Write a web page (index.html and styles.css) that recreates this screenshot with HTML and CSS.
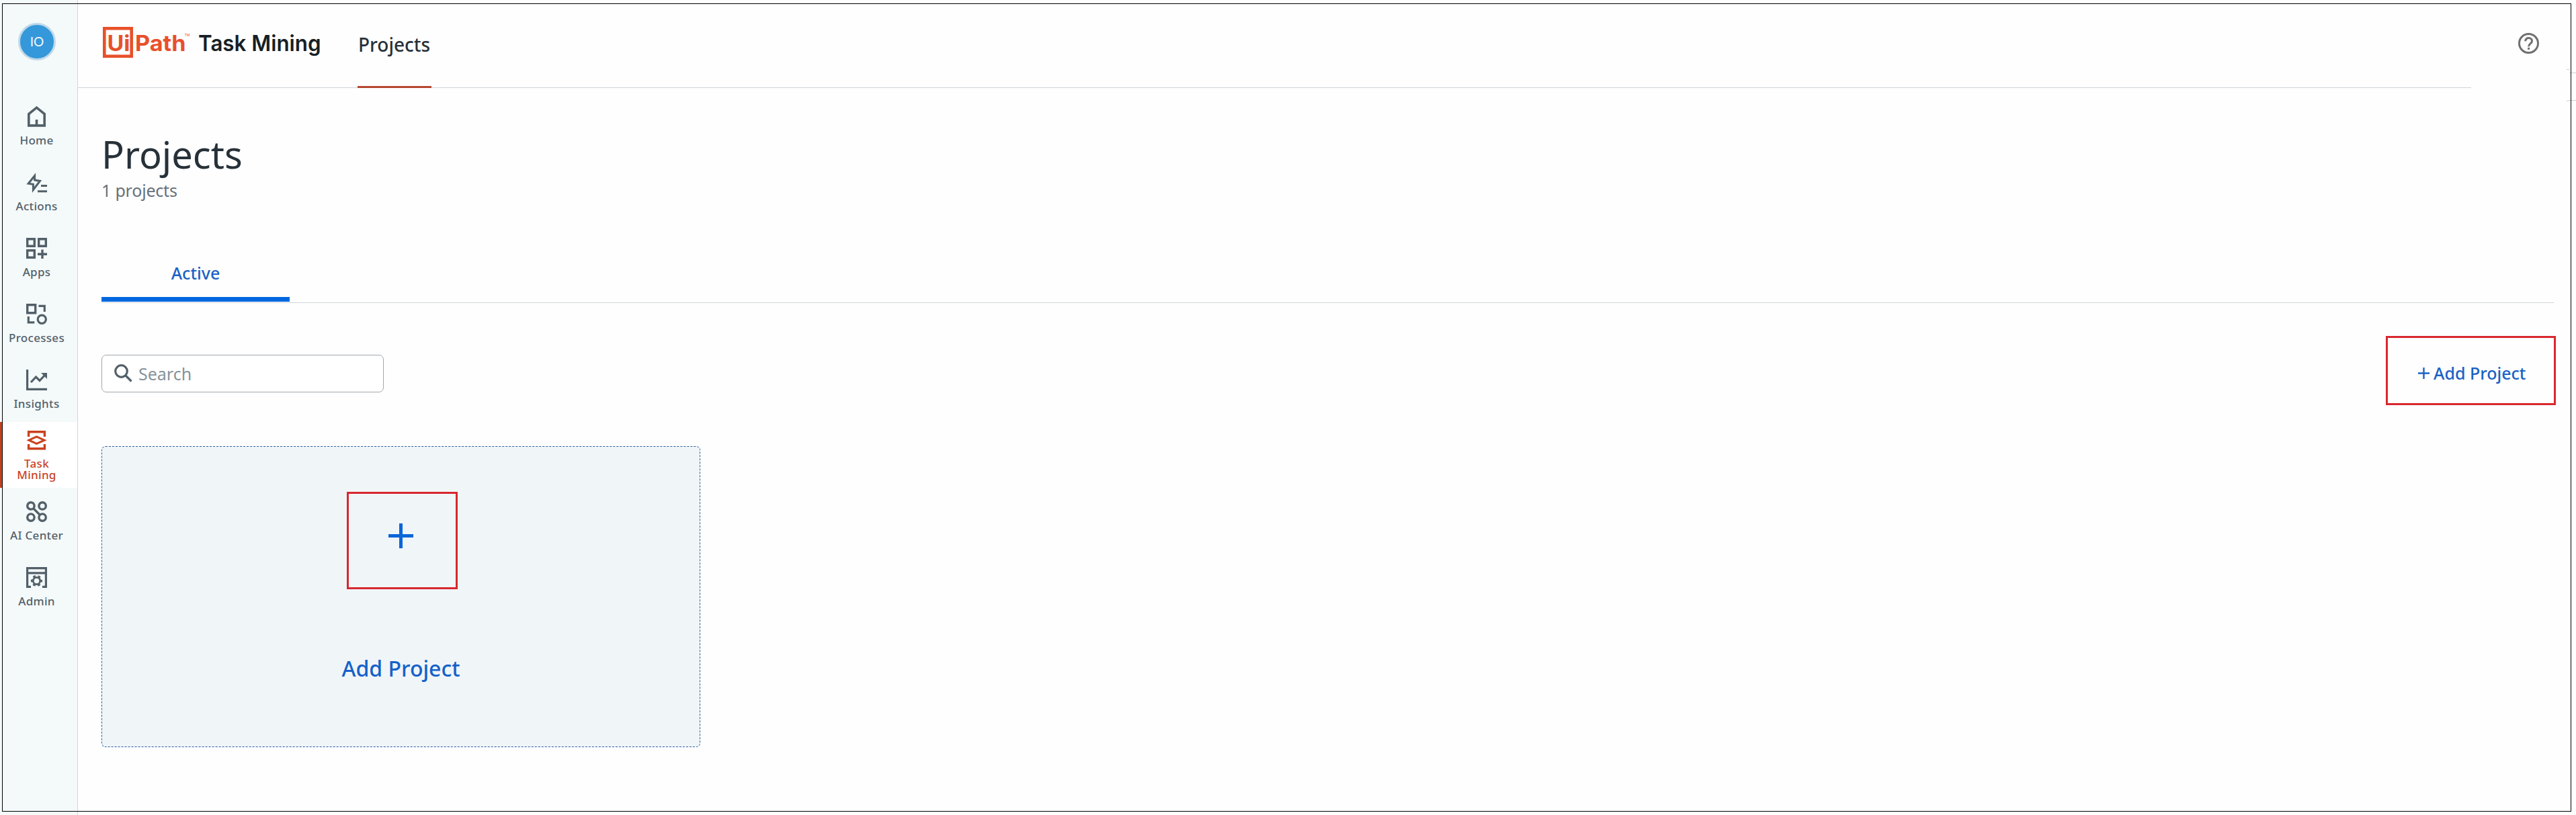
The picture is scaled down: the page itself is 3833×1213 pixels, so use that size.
FILE: index.html
```html
<!DOCTYPE html>
<html lang="en">
<head>
<meta charset="utf-8">
<title>Task Mining - Projects</title>
<link rel="stylesheet" href="styles.css">
</head>
<body>
<aside class="sidebar">
  <div class="avatar">IO</div>
  <nav class="side-nav">
    <a class="item"><svg class="icon" viewBox="0 0 31 31"><path d="M3.800 11.600 15.500 2.200l11.700 9.400v17.300H3.800z" stroke-width="3.600"/><path d="M15.500 20v9" stroke-width="3.600"/></svg><span>Home</span></a>
    <a class="item"><svg class="icon" viewBox="0 0 31 31"><path d="M12.600 5.500 3.200 17.200l7.200 1v8.300L20.500 13.400l-7.900-1.400z" stroke-width="3"/><path d="M22 20.500h9M17 28.800h14" stroke-width="3"/></svg><span>Actions</span></a>
    <a class="item"><svg class="icon" viewBox="0 0 31 31"><path d="M1.700 1.700h10.600v10.600H1.700zM18.700 1.700h10.600v10.600H18.700zM1.700 18.700h10.600v10.600H1.700z" stroke-width="3.400"/><path d="M24 17.500V31M17 24.200h14" stroke-width="3.400"/></svg><span>Apps</span></a>
    <a class="item"><svg class="icon" viewBox="0 0 31 31"><path d="M1.700 1.700h12v12h-12z" stroke-width="3.400"/><path d="M18.500 3.300h8.800v8.700M3.300 19v8.800h9" stroke-width="3.200"/><circle cx="23.300" cy="23.300" r="6.100" stroke-width="3.200"/></svg><span>Processes</span></a>
    <a class="item"><svg class="icon" viewBox="0 0 31 31"><path d="M1.600 0v29.400H31" stroke-width="3.200"/><path d="m7 19 7.500-8 5.500 5.500 8-8.500" stroke-width="3.200"/><path class="solid" d="M22 5h9v9z"/></svg><span>Insights</span></a>
    <a class="item active"><svg class="icon" viewBox="0 0 31 31"><path d="M3.600 10V2.800h23.800V10M3.600 21v6.800h23.800V21" stroke-width="3.400"/><path d="M4 15.200 15.500 10 27 15.200l-11.500 5.200z" stroke-width="3"/></svg><span>Task<br>Mining</span></a>
    <a class="item"><svg class="icon" viewBox="0 0 31 31"><g stroke-width="3.400"><circle cx="6.900" cy="6.900" r="5.200"/><circle cx="24.100" cy="6.900" r="5.200"/><circle cx="6.900" cy="24.100" r="5.200"/><circle cx="24.100" cy="24.100" r="5.200"/><path d="m10.500 10.500 10 10"/></g></svg><span>AI Center</span></a>
    <a class="item"><svg class="icon" viewBox="0 0 31 31"><path d="M7 29.400H1.600V1.600h27.800v27.800H24M1.600 8.800h27.800" stroke-width="3.200"/><circle cx="15.500" cy="20.500" r="5.200" stroke-width="2.800"/><circle cx="15.500" cy="20.500" r="7.300" stroke-width="2.600" stroke-dasharray="3.820 3.820" stroke-dashoffset="1.900"/></svg><span>Admin</span></a>
  </nav>
</aside>
<main class="main">
  <header class="header">
    <div class="bar">
      <svg class="logo" width="328" height="56" viewBox="0 0 328 56">
        <rect class="logo-box" x="2.300" y="7.300" width="40.400" height="41.400"/>
        <g class="logo-brand">
          <text x="6.500" y="41" textLength="34" lengthAdjust="spacingAndGlyphs">Ui</text>
          <text x="48" y="41" textLength="75.500" lengthAdjust="spacingAndGlyphs">Path</text>
          <text class="tm" x="121.500" y="19">TM</text>
        </g>
        <text class="logo-product" x="142" y="41" textLength="182.500" lengthAdjust="spacingAndGlyphs">Task Mining</text>
      </svg>
      <a class="top-tab">Projects</a>
    </div>
    <svg class="help" viewBox="0 0 31 31"><circle cx="15.500" cy="15.500" r="14" stroke-width="3"/><path d="M10.700 12.200c0-6.200 9.800-6.100 9.800 0 0 3.700-4.900 3.900-4.900 8" stroke-width="3"/><path d="M15.600 21.800v3" stroke-width="3"/></svg>
  </header>
  <section class="content">
    <h1>Projects</h1>
    <p class="count">1 projects</p>
    <div class="tabs"><a class="tab">Active</a></div>
    <div class="toolbar">
      <label class="search"><svg viewBox="0 0 27 27"><circle cx="10.500" cy="10.500" r="8.800"/><path d="m17 17 8.500 8.500"/></svg><span>Search</span></label>
      <a class="add-button"><svg viewBox="0 0 17 17"><path d="M8.500 0v17M0 8.500h17"/></svg><span>Add Project</span></a>
    </div>
    <a class="card">
      <span class="card-plus"><svg viewBox="0 0 37 37"><path d="M18.500 0v37M0 18.500h37"/></svg></span>
      <span class="card-label">Add Project</span>
    </a>
  </section>
</main>
<svg class="edge-marks" viewBox="0 0 14 48"><path d="M0 .5h4M4 5.500h10M4 46.500h10M0 47h4"/></svg>
<div class="frame"></div>
</body>
</html>
```
FILE: styles.css
```css
* { box-sizing: border-box; }
body {
  margin: 0;
  width: 3833px;
  height: 1213px;
  position: relative;
  display: flex;
  overflow: hidden;
  background: #fefefe;
  color: #273139;
  font-family: "Noto Sans", sans-serif;
}
svg { display: block; flex: none; fill: none; }

/* Window outline drawn over the page */
.frame {
  position: absolute;
  inset: 5px 7px 5px 3px;
  border: 1px solid #000;
}
.edge-marks {
  position: absolute;
  left: 3819px;
  top: 103px;
  width: 14px;
  height: 48px;
  stroke: #cccccc;
}

/* Sidebar */
.sidebar {
  flex: none;
  width: 116px;
  border-right: 1px solid #cfd6db;
  background: #f4f9fa;
}
.avatar {
  width: 56px;
  height: 56px;
  margin: 34px 0 48px 27px;
  border: 3px solid #c0d9e8;
  border-radius: 50%;
  background: #3498db;
  color: #f2faff;
  font: 400 19px/50px "Lato", sans-serif;
  text-align: center;
}
.item {
  display: flex;
  flex-direction: column;
  align-items: center;
  gap: 11px;
  height: 98px;
  padding: 20px 6px 0 0;
  color: #526069;
  font-size: 17px;
  font-weight: 500;
  line-height: 17px;
  letter-spacing: 0.3px;
  text-align: center;
}
.item span { white-space: nowrap; }
.icon { width: 31px; height: 31px; stroke: currentColor; }
.icon .solid { fill: currentColor; stroke: none; }
.item.active {
  gap: 10px;
  padding: 12px 9px 0 0;
  border-left: 3px solid #c6401d;
  background: #fff;
  color: #c9421f;
}

/* Header */
.main { flex: 1; }
.header { display: flex; height: 131px; }
.bar {
  display: flex;
  width: 3561px;
  padding-left: 37px;
  border-bottom: 1px solid #cfd4d8;
}
.logo { margin-top: 35px; overflow: visible; }
.logo-box { stroke: #e8502a; stroke-width: 4.600; }
.logo text { font-family: "Inter", sans-serif; font-size: 33px; font-weight: 600; }
.logo-brand { fill: #e8502a; }
.logo .logo-brand text { font-weight: 700; }
.logo .logo-brand .tm { font-size: 5px; font-weight: 400; }
.logo-product { fill: #171f26; }
.top-tab {
  width: 110px;
  height: 131px;
  margin-left: 51px;
  padding: 46px 0 0 1px;
  border-bottom: 3px solid #b5472f;
  font-size: 28px;
  font-weight: 500;
  line-height: 40px;
  white-space: nowrap;
}
.help { width: 31px; height: 31px; margin: 49px 0 0 70px; stroke: #707070; }

/* Page content */
.content { padding: 70px 30px 0 35px; }
h1 { margin: 0; font-size: 56px; font-weight: 400; line-height: 56px; }
.count {
  margin: 9px 0 0;
  color: #687078;
  font-size: 25px;
  line-height: 34px;
  letter-spacing: -0.2px;
}
.tabs {
  display: flex;
  margin: 89px 3px 0 0;
  padding-bottom: 1px;
  border-bottom: 1px solid #cfd4d8;
}
.tab {
  width: 280px;
  padding-bottom: 19px;
  border-bottom: 7px solid #0067df;
  color: #1b62c4;
  font-size: 25px;
  font-weight: 550;
  line-height: 34px;
  text-align: center;
}
.toolbar {
  display: flex;
  justify-content: space-between;
  align-items: flex-start;
  height: 103px;
  margin-top: 49px;
}
.search {
  display: flex;
  align-items: center;
  gap: 9px;
  width: 420px;
  height: 56px;
  margin-top: 28px;
  padding-left: 18px;
  border: 1px solid #a2a8ad;
  border-radius: 7px;
  background: #fff;
  color: #87939a;
  font-size: 25px;
  line-height: 34px;
}
.search svg { width: 27px; height: 27px; margin-top: -2px; stroke: #526069; stroke-width: 3.200; }
.add-button {
  display: flex;
  gap: 6px;
  width: 253px;
  height: 103px;
  padding: 35px 0 0 45px;
  border: 3px solid #d9272e;
  color: #1b62c4;
  font-size: 25px;
  font-weight: 550;
  line-height: 34px;
  white-space: nowrap;
}
.add-button svg { width: 17px; height: 17px; margin-top: 9px; stroke: #1b62c4; stroke-width: 2.400; }
.card {
  display: flex;
  flex-direction: column;
  align-items: center;
  width: 891px;
  height: 448px;
  margin-top: 61px;
  padding-top: 67px;
  border: 1px dashed #2b5f9e;
  border-radius: 6px;
  background: #f0f5f8;
}
.card-plus {
  width: 165px;
  height: 145px;
  margin-left: 4px;
  padding: 44px 0 0 59px;
  border: 3px solid #d9272e;
}
.card-plus svg { width: 37px; height: 37px; stroke: #0b66d6; stroke-width: 5; }
.card-label {
  margin-top: 97px;
  color: #1562c8;
  font-size: 32px;
  font-weight: 550;
  line-height: 42px;
}
```
